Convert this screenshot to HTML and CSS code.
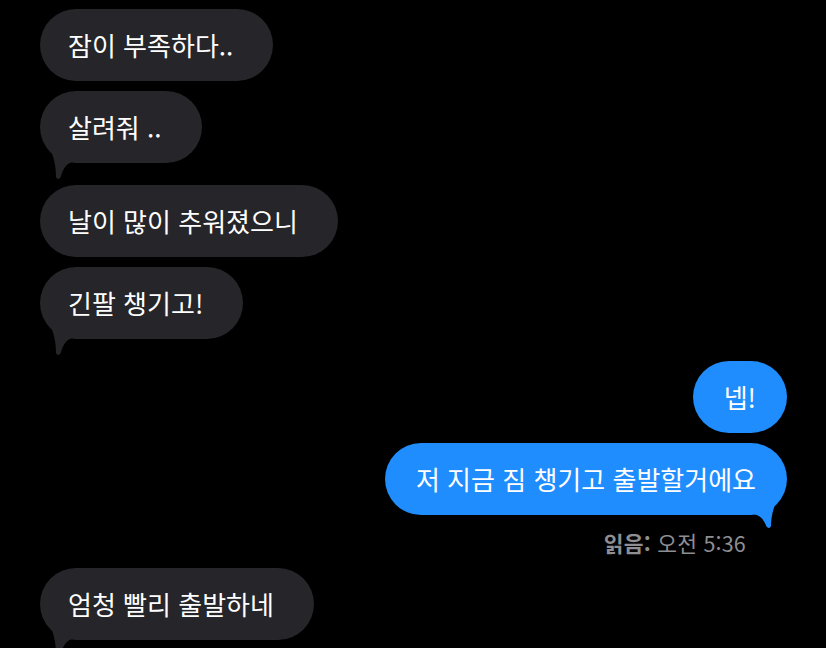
FILE: index.html
```html
<!DOCTYPE html>
<html lang="ko">
<head>
<meta charset="utf-8">
<link rel="stylesheet" href="styles.css">
</head>
<body>
<div class="chat">
  <div class="msg recv">잠이 부족하다..</div>
  <div class="msg recv tail">살려줘 ..<svg class="tl" viewBox="0 -20 40 40"><path d="M8 -18 C14 -8 16 4 16 14 C17 16.5 19 16.5 20.5 14.5 C23 6 26 1 32 -1 L32 -18 Z"/></svg></div>
  <div class="msg recv">날이 많이 추워졌으니</div>
  <div class="msg recv tail">긴팔 챙기고!<svg class="tl" viewBox="0 -20 40 40"><path d="M8 -18 C14 -8 16 4 16 14 C17 16.5 19 16.5 20.5 14.5 C23 6 26 1 32 -1 L32 -18 Z"/></svg></div>
  <div class="msg sent">넵!</div>
  <div class="msg sent tail">저 지금 짐 챙기고 출발할거에요<svg class="tr" viewBox="0 -20 40 40"><path d="M8 -18 C14 -8 16 2 16 11 C17 13.5 19 13.5 20.5 11.5 C23 5 26 1 33 -1 L33 -18 Z"/></svg></div>
  <div class="receipt"><b>읽음:</b> 오전 5:36</div>
  <div class="msg recv tail">엄청 빨리 출발하네<svg class="tl" viewBox="0 -20 40 40"><path d="M8 -18 C14 -8 16 4 16 14 C17 16.5 19 16.5 20.5 14.5 C23 6 26 1 32 -1 L32 -18 Z"/></svg></div>
</div>
</body>
</html>
```

FILE: styles.css
```css
html, body {
  margin: 0;
  background: #000;
}
body {
  width: 826px;
  height: 648px;
  overflow: hidden;
  font-family: "Noto Sans CJK KR", "Noto Sans", sans-serif;
}
.chat {
  display: flex;
  flex-direction: column;
  gap: 10px;
  padding: 9px 39px 0 40px;
}
.msg {
  position: relative;
  font-size: 26px;
  letter-spacing: 0;
  line-height: 32px;
  border-radius: 36px;
  color: #fff;
  white-space: nowrap;
}
.recv {
  align-self: flex-start;
  background: #262529;
  padding: 20px 40px 20px 28px;
}
.recv svg path { fill: #262529; }
.sent {
  align-self: flex-end;
  background: #1f8dfe;
  padding: 20px 31px;
}
.sent svg path { fill: #1f8dfe; }
.tail { margin-bottom: 12px; }
.msg svg {
  position: absolute;
  width: 40px;
  height: 40px;
  bottom: -20px;
}
.tl { left: 0; }
.tr { right: 0; transform: scaleX(-1); }
.receipt {
  align-self: flex-end;
  margin: -6px 41px 3px 0;
  font-size: 21.5px;
  letter-spacing: 0.2px;
  line-height: 24px;
  color: #8e8e93;
}
.receipt b { font-weight: 600; }
```
